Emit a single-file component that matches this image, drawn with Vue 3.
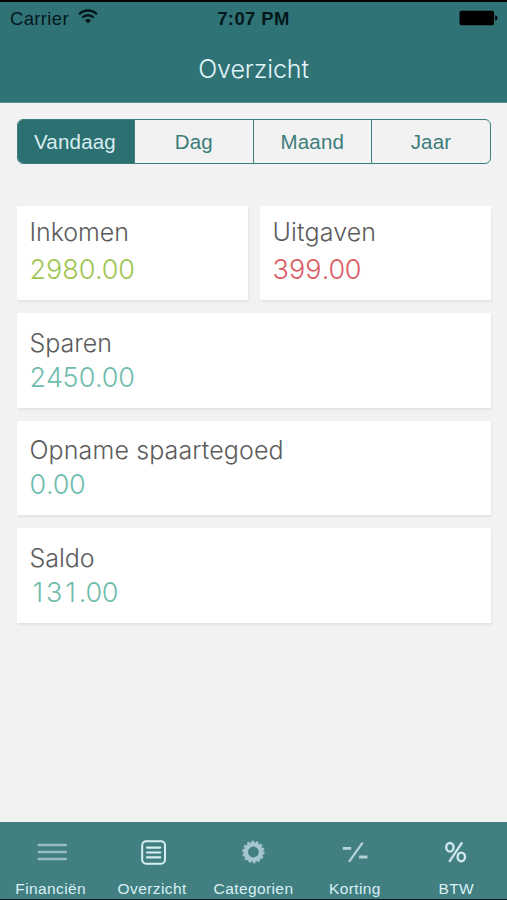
<script setup>
const periods = ['Vandaag', 'Dag', 'Maand', 'Jaar']
const cards = [
  { id: 'inkomen', label: 'Inkomen', value: '2980.00', tone: 'green' },
  { id: 'uitgaven', label: 'Uitgaven', value: '399.00', tone: 'red' },
  { id: 'sparen', label: 'Sparen', value: '2450.00', tone: 'teal wide' },
  { id: 'opname', label: 'Opname spaartegoed', value: '0.00', tone: 'teal wide' },
  { id: 'saldo', label: 'Saldo', value: '131.00', tone: 'teal wide' },
]
const tabs = [
  { id: 'financien', label: 'Financiën' },
  { id: 'overzicht', label: 'Overzicht' },
  { id: 'categorien', label: 'Categorien' },
  { id: 'korting', label: 'Korting' },
  { id: 'btw', label: 'BTW' },
]
</script>

<template>
  <div class="screen">
    <header class="header">
      <div class="status">
        <div class="carrier">
          <span class="carrier-name">Carrier</span>
          <svg class="wifi" width="20" height="15" viewBox="0 0 20 15">
            <g fill="none" stroke="#03181b" stroke-width="2.3">
              <path d="M1 5.2a12.8 12.8 0 0 1 18 0" />
              <path d="M4.3 8.6a8.1 8.1 0 0 1 11.4 0" />
            </g>
            <path d="M6.8 11.2a4.6 4.6 0 0 1 6.4 0L10 14.6z" fill="#03181b" />
          </svg>
        </div>
        <div class="time">7:07 PM</div>
        <div class="power">
          <svg width="39" height="16" viewBox="0 0 39 16">
            <rect x="0.5" y="0.8" width="34.6" height="14.4" rx="1.8" />
            <path d="M36.2 5.2q2.3.8 2.3 2.8t-2.3 2.8z" />
          </svg>
        </div>
      </div>
      <h1 class="title">Overzicht</h1>
    </header>

    <main class="content">
      <div class="segments">
        <div v-for="(p, i) in periods" :key="p" class="segment" :class="{ active: i === 0 }">{{ p }}</div>
      </div>
      <section class="cards">
        <article v-for="c in cards" :key="c.id" class="card" :class="c.tone">
          <div class="label" :class="c.id">{{ c.label }}</div>
          <!-- Fixed-width cells keep the plain "1" while aligning the digits -->
          <div class="value">
            <span v-for="(ch, i) in c.value" :key="i" :class="ch === '.' ? 'point' : 'digit'">{{ ch }}</span>
          </div>
        </article>
      </section>
    </main>

    <nav class="tabbar">
      <div v-for="t in tabs" :key="t.id" class="tab">
        <svg class="icon" width="40" height="30" viewBox="0 0 40 30">
          <path v-if="t.id === 'financien'" d="M7.8 8h27M7.8 15h27M7.8 22h27" stroke="#98bec3" stroke-width="2.6" stroke-linecap="round" />
          <g v-else-if="t.id === 'overzicht'" fill="none" stroke="#d6eff2">
            <rect x="10.2" y="4.2" width="22.8" height="22.6" rx="4" stroke-width="2" />
            <path d="M15 10.6h13.2M15 15.5h13.2M15 20.4h13.2" stroke-width="2.2" stroke-linecap="round" />
          </g>
          <g v-else-if="t.id === 'categorien'" fill="none" stroke="#a5c6cc">
            <circle cx="20.4" cy="15" r="7.6" stroke-width="4.4" />
            <circle cx="20.4" cy="15" r="10.2" stroke-width="2" stroke-dasharray="2.65 1.928" />
          </g>
          <g v-else-if="t.id === 'korting'" fill="none" stroke="#b5d2d6">
            <path d="M7.8 11.4h8.4M24 20h8.4" stroke-width="2.8" />
            <path d="M14 24.8L27.6 5.6" stroke-width="2.3" />
          </g>
          <g v-else fill="none" stroke="#d0e8ed">
            <ellipse cx="13.9" cy="10.3" rx="3.7" ry="4.3" stroke-width="2.4" />
            <ellipse cx="25.3" cy="19.9" rx="3.7" ry="4.3" stroke-width="2.4" />
            <path d="M13.2 24.9L26.2 5.3" stroke-width="2.3" />
          </g>
        </svg>
        <span class="tab-label">{{ t.label }}</span>
      </div>
    </nav>
  </div>
</template>

<style>
body { margin: 0; }
</style>

<style scoped>
.screen {
  box-sizing: border-box;
  width: 507px;
  height: 900px;
  display: flex;
  flex-direction: column;
  background: #f2f2f2;
  border-top: 2px solid #000;
  border-bottom: 1px solid #031c22;
  font-family: "Liberation Sans", Arial, sans-serif;
  overflow: hidden;
}
.header {
  box-sizing: border-box;
  height: 101px;
  flex: none;
  background: #307377;
  border-bottom: 1px solid #5d9094;
}
.status {
  height: 33px;
  display: grid;
  grid-template-columns: 1fr auto 1fr;
  align-items: center;
  padding: 0 9px 0 10px;
  color: #03181b;
}
.carrier { display: flex; align-items: center; gap: 9px; }
.carrier-name { font-size: 18.5px; letter-spacing: 0.35px; line-height: 33px; }
.wifi { margin-bottom: 4px; }
.time { font-size: 18.5px; font-weight: 700; letter-spacing: 0.4px; margin-right: 1px; }
.power { display: flex; justify-content: flex-end; padding-bottom: 2px; fill: #000; }
.title {
  margin: 0;
  padding-top: 17px;
  font: 350 25px/34px Inter, sans-serif;
  letter-spacing: -0.1px;
  text-align: center;
  color: #e2f6f9;
}
.content { flex: 1; padding: 16px 16px 0 17px; }
.segments {
  box-sizing: border-box;
  height: 45px;
  display: grid;
  grid-template-columns: 116px 118.5px 118.5px 1fr;
  border: 1.5px solid #3c7f7c;
  border-radius: 6px;
  overflow: hidden;
}
.segment {
  text-align: center;
  font-size: 20.5px;
  letter-spacing: 0.2px;
  line-height: 43px;
  color: #3c7d7a;
}
.segment + .segment { border-left: 1.5px solid #3c7f7c; }
.segment.active { background: #2d7072; color: #d9edf0; padding-right: 2px; }
.cards {
  margin-top: 41.5px;
  display: grid;
  grid-template-columns: 1fr 1fr;
  grid-auto-rows: 94.5px;
  gap: 13px 12px;
}
.card {
  box-sizing: border-box;
  padding: 8.5px 12.5px;
  background: #fff;
  box-shadow: 1px 2px 2px rgba(0, 0, 0, 0.06);
  font-family: Inter, sans-serif;
  font-weight: 350;
}
.card.wide { grid-column: 1 / -1; padding-top: 11.5px; }
.label { font-size: 25px; line-height: 36px; letter-spacing: -0.05px; color: #5c5c5c; }
.label.opname { letter-spacing: 0.12px; }
.label.uitgaven { letter-spacing: 0.15px; }
.value { display: flex; font-size: 27px; line-height: 40px; }
.digit { width: 16.4px; text-align: center; }
.point { width: 6.8px; text-align: center; }
.wide .value { line-height: 34px; }
.green .value { color: #9fc653; }
.red .value { color: #dc5c64; }
.teal .value { color: #70bcae; }
.tabbar {
  height: 77px;
  flex: none;
  display: grid;
  grid-template-columns: repeat(5, 1fr);
  background: #427f81;
}
.tab { display: flex; flex-direction: column; align-items: center; padding-top: 15px; }
.icon { flex: none; }
.tab-label { margin-top: 11px; font-size: 15.5px; line-height: 22px; letter-spacing: 0.4px; color: #d9f0f5; }
</style>
